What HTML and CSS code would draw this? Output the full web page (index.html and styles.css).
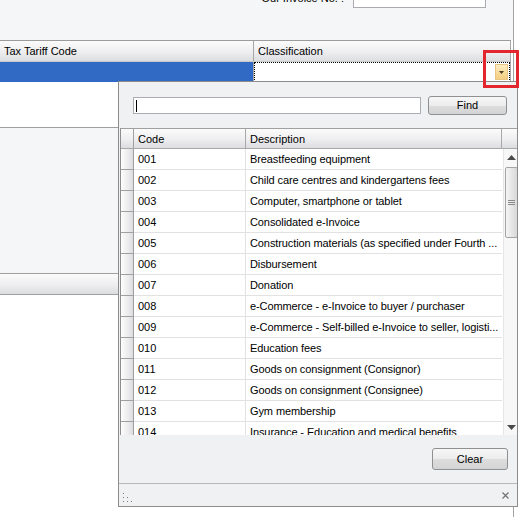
FILE: index.html
```html
<!DOCTYPE html>
<html>
<head>
<meta charset="utf-8">
<link rel="stylesheet" href="styles.css">
</head>
<body>
<div class="form">
  <div class="top">
    <span class="lbl">Our Invoice No. :</span>
    <div class="inv-input"></div>
  </div>
  <div class="mgrid">
    <div class="mg-head">
      <div class="mc1">Tax Tariff Code</div>
      <div class="mc2">Classification</div>
    </div>
    <div class="mg-row">
      <div class="mc1 sel"></div>
      <div class="mc2 edit"><span class="ddbtn"><svg width="5" height="3" viewBox="0 0 5 3"><path d="M0 0H5L2.5 3Z" fill="#4a3d25"/></svg></span></div>
    </div>
    <div class="mg-empty"></div>
  </div>
  <div class="gray-area"></div>
  <div class="bar"></div>
</div>

<div class="popup">
  <div class="search">
    <div class="sinput"><span class="caret"></span></div>
    <div class="btn find">Find</div>
  </div>
  <div class="grid">
    <div class="ghead">
      <div class="ind hind"></div>
      <div class="gc code">Code</div>
      <div class="gc desc">Description</div>
      <div class="gcorner"></div>
    </div>
    <div class="gbody">
      <div class="rows">
        <div class="row"><div class="ind"></div><div class="gc code">001</div><div class="gc desc">Breastfeeding equipment</div></div>
        <div class="row"><div class="ind"></div><div class="gc code">002</div><div class="gc desc">Child care centres and kindergartens fees</div></div>
        <div class="row"><div class="ind"></div><div class="gc code">003</div><div class="gc desc">Computer, smartphone or tablet</div></div>
        <div class="row"><div class="ind"></div><div class="gc code">004</div><div class="gc desc">Consolidated e-Invoice</div></div>
        <div class="row"><div class="ind"></div><div class="gc code">005</div><div class="gc desc">Construction materials (as specified under Fourth ...</div></div>
        <div class="row"><div class="ind"></div><div class="gc code">006</div><div class="gc desc">Disbursement</div></div>
        <div class="row"><div class="ind"></div><div class="gc code">007</div><div class="gc desc">Donation</div></div>
        <div class="row"><div class="ind"></div><div class="gc code">008</div><div class="gc desc">e-Commerce - e-Invoice to buyer / purchaser</div></div>
        <div class="row"><div class="ind"></div><div class="gc code">009</div><div class="gc desc">e-Commerce - Self-billed e-Invoice to seller, logisti...</div></div>
        <div class="row"><div class="ind"></div><div class="gc code">010</div><div class="gc desc">Education fees</div></div>
        <div class="row"><div class="ind"></div><div class="gc code">011</div><div class="gc desc">Goods on consignment (Consignor)</div></div>
        <div class="row"><div class="ind"></div><div class="gc code">012</div><div class="gc desc">Goods on consignment (Consignee)</div></div>
        <div class="row"><div class="ind"></div><div class="gc code">013</div><div class="gc desc">Gym membership</div></div>
        <div class="row"><div class="ind"></div><div class="gc code">014</div><div class="gc desc">Insurance - Education and medical benefits</div></div>
      </div>
      <div class="vscroll">
        <div class="arrow"><svg width="9" height="5" viewBox="0 0 9 5"><path d="M0 5H9L4.5 0Z" fill="#4a4a4a"/></svg></div>
        <div class="thumb"><svg width="7" height="6" viewBox="0 0 7 6"><path d="M0 0.5H7M0 2.5H7M0 4.5H7" stroke="#8a8a8a" stroke-width="1"/></svg></div>
        <div class="track"></div>
        <div class="arrow"><svg width="9" height="5" viewBox="0 0 9 5"><path d="M0 0H9L4.5 5Z" fill="#4a4a4a"/></svg></div>
      </div>
    </div>
  </div>
  <div class="footer">
    <div class="btn clear">Clear</div>
  </div>
  <div class="grip">
    <svg class="dots" width="12" height="10" viewBox="0 0 12 10">
      <rect x="1" y="1" width="1" height="1" fill="#7a7a7a"/>
      <rect x="1" y="5" width="1" height="1" fill="#7a7a7a"/>
      <rect x="5" y="5" width="1" height="1" fill="#7a7a7a"/>
      <rect x="1" y="9" width="1" height="1" fill="#7a7a7a"/>
      <rect x="5" y="9" width="1" height="1" fill="#7a7a7a"/>
      <rect x="9" y="9" width="1" height="1" fill="#7a7a7a"/>
    </svg>
    <svg class="close" width="7" height="7" viewBox="0 0 7 7"><path d="M0.5 0.5L6.5 6.5M6.5 0.5L0.5 6.5" stroke="#6e6e6e" stroke-width="1.1"/></svg>
  </div>
</div>

<div class="redbox"></div>
</body>
</html>
```
FILE: styles.css
```css
* { box-sizing: border-box; }
html, body { margin: 0; padding: 0; }
body {
  width: 522px;
  height: 517px;
  overflow: hidden;
  position: relative;
  background: #ffffff;
  font-family: "Liberation Sans", Arial, sans-serif;
  font-size: 11px;
  color: #000;
}

/* underlying form */
.form {
  width: 514px;
  height: 517px;
  border-right: 1px solid #a3a3a3;
  background: #ffffff;
}
.top {
  height: 40px;
  background: #f5f6f7;
  display: flex;
  justify-content: flex-end;
  align-items: flex-start;
  gap: 9px;
  padding-right: 27px;
}
.lbl {
  margin-top: -8px;
  font-size: 11px;
  line-height: 13px;
}
.inv-input {
  width: 133px;
  height: 20px;
  margin-top: -12px;
  border: 1px solid #a9abb0;
  background: #fff;
}
.mgrid {
  width: 511px;
  border-top: 1px solid #9c9c9c;
  border-right: 1px solid #a8a8a8;
  border-bottom: 1px solid #a0a0a0;
  background: #fff;
}
.mg-head {
  display: flex;
  height: 21px;
  border-bottom: 1px solid #c9c9c9;
  background: linear-gradient(#fbfbfb, #eeeef0 55%, #dcdde0);
  line-height: 20px;
  font-size: 11px;
}
.mc1 {
  width: 254px;
  border-right: 1px solid #a6a6a6;
  padding-left: 4px;
}
.mc2 {
  flex: 1;
  padding-left: 4px;
}
.mg-row {
  display: flex;
  height: 20px;
}
.sel { background: #316ac5; }
.edit {
  position: relative;
  background: #fff;
  border: 1px dotted #000;
  display: flex;
  justify-content: flex-end;
  align-items: center;
  padding-right: 1px;
}
.ddbtn {
  width: 13px;
  height: 16px;
  border: 1px solid #e6c680;
  background: linear-gradient(#fdeec6, #f8d996 60%, #f4cd80);
  display: flex;
  align-items: center;
  justify-content: center;
}
.mg-empty { height: 45px; }
.gray-area {
  height: 146px;
  background: #f5f6f7;
  border-bottom: 1px solid #a0a0a0;
}
.bar {
  height: 21px;
  border-bottom: 1px solid #a0a0a0;
  background: linear-gradient(#fbfbfb, #eeeef0 55%, #dcdde0);
}

/* popup */
.popup {
  position: absolute;
  left: 118px;
  top: 81px;
  width: 400px;
  height: 426px;
  border: 1px solid #8c8c8c;
  background: #f0f1f2;
  display: flex;
  flex-direction: column;
}
.search {
  height: 46px;
  display: flex;
  align-items: center;
  gap: 7px;
  padding: 0 9px 0 14px;
}
.sinput {
  width: 288px;
  height: 17px;
  border: 1px solid #abadb3;
  background: #fff;
  position: relative;
}
.caret {
  position: absolute;
  left: 2px;
  top: 2px;
  width: 1px;
  height: 12px;
  background: #000;
}
.btn {
  border: 1px solid #8f9092;
  border-radius: 3px;
  background: linear-gradient(#f7f7f7, #ececec 50%, #dddddd 51%, #d4d4d4);
  display: flex;
  align-items: center;
  justify-content: center;
  font-size: 11px;
}
.find { width: 79px; height: 19px; }
.grid {
  height: 307px;
  margin-left: 1px;
  border-top: 1px solid #a0a0a0;
  border-left: 1px solid #8e8e8e;
  background: #fff;
  display: flex;
  flex-direction: column;
}
.ghead {
  display: flex;
  height: 20px;
  border-bottom: 1px solid #a8a8a8;
  background: linear-gradient(#fbfbfb, #eeeef0 55%, #dcdde0);
  font-size: 11px;
}
.ind {
  width: 13px;
  flex: none;
  border-right: 1px solid #a0a0a0;
  border-bottom: 1px solid #a0a0a0;
  background: linear-gradient(90deg, #fdfdfd, #ececee 60%, #dcdcdf);
}
.hind { border-bottom: none; background: none; }
.gc {
  padding-left: 4px;
  white-space: nowrap;
  overflow: hidden;
  display: flex;
  align-items: center;
}
.code { width: 112px; flex: none; border-right: 1px solid #d4d4d4; }
.desc { width: 256px; flex: none; }
.ghead .gc { border-right: 1px solid #a8a8a8; }
.gcorner { flex: 1; }
.gbody {
  flex: 1;
  display: flex;
  overflow: hidden;
}
.rows { width: 382px; flex: none; }
.row {
  display: flex;
  height: 21px;
  font-size: 11px;
}
.row .gc { border-bottom: 1px solid #e2e2e2; }
.row .code { border-right: 1px solid #e2e2e2; }
.row .desc { width: 256px; letter-spacing: -0.1px; }
.vscroll {
  flex: 1;
  display: flex;
  flex-direction: column;
  background: #f7f7f7;
  border-left: 1px solid #e6e6e6;
}
.arrow {
  height: 16px;
  display: flex;
  align-items: center;
  justify-content: center;
}
.thumb {
  height: 71px;
  margin: 2px 0 0 1px;
  width: 13px;
  border: 1px solid #a4a4a4;
  border-radius: 2px;
  background: linear-gradient(90deg, #f5f5f5, #e7e7e7 50%, #d8d8d8);
  display: flex;
  align-items: center;
  justify-content: center;
}
.track { flex: 1; }
.footer {
  height: 48px;
  display: flex;
  justify-content: flex-end;
  align-items: flex-start;
  padding: 13px 9px 0 0;
  background: #f0f1f2;
}
.clear { width: 76px; height: 22px; }
.grip {
  flex: 1;
  border-top: 1px solid #b8b8b8;
  display: flex;
  align-items: center;
  justify-content: space-between;
  padding: 0 8px 0 3px;
  background: #f0f1f2;
}
.dots { margin-top: 3px; }

.redbox {
  position: absolute;
  left: 483px;
  top: 50px;
  width: 36px;
  height: 38px;
  border: 3px solid #e3262d;
}
```
